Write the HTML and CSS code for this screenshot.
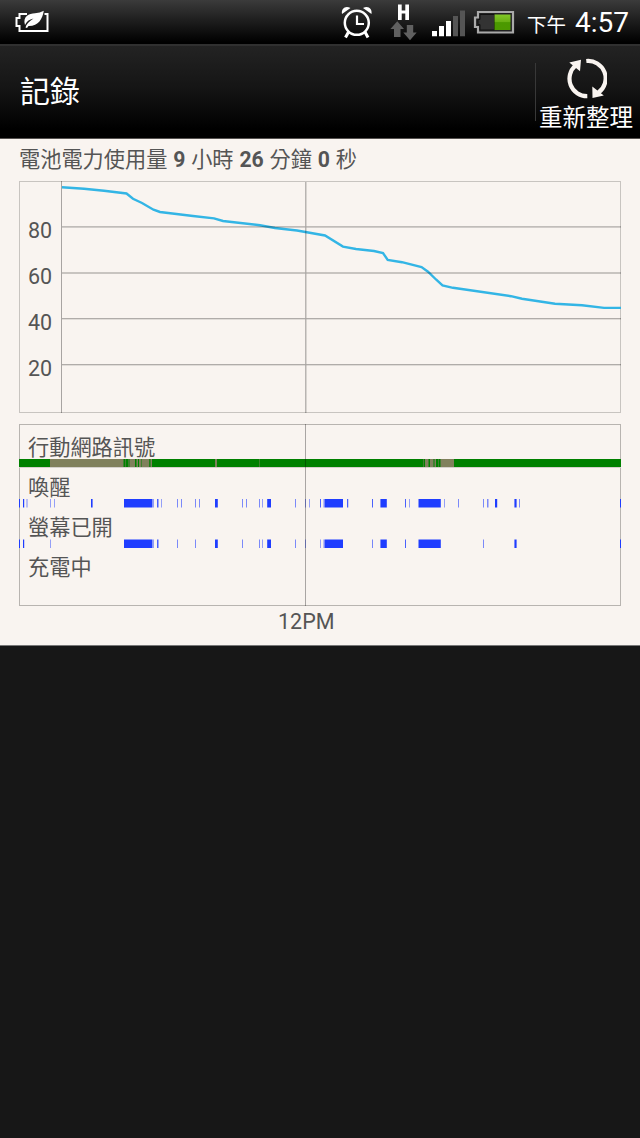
FILE: index.html
```html
<!DOCTYPE html>
<html lang="zh-Hant">
<head>
<meta charset="utf-8">
<title>記錄</title>
<link rel="stylesheet" href="styles.css">
</head>
<body>
<header class="status-bar">
  <svg class="icon-saver" width="34" height="24" viewBox="15 10 34 24">
    <path d="M27 14H19.500V18H16.500V26H19.500V31H47.500V14H44.500" fill="none" stroke="#fff" stroke-width="2"/>
    <path d="M43.800 10.800C42.500 19 38.500 26.200 28.500 26L27 28L25.500 27.500C26 24.500 29 21.500 33.500 18.500C29 19.500 26.500 21.500 25 25C22.500 16.500 29 13.500 35 13.300Q40 13 43.800 10.800Z" fill="#fff"/>
  </svg>
  <div class="status-right">
    <svg width="176" height="38" viewBox="340 4 176 38">
      <g fill="none" stroke="#fff">
        <circle cx="356.800" cy="22.800" r="12" stroke-width="2.500"/>
        <path d="M357 15.500V24H364" stroke-width="2.200"/>
        <path d="M348.500 32L345.500 37.500M365 32L368 37.500" stroke-width="3"/>
      </g>
      <path d="M342 14C341 8.500 345.500 5 350.500 8ZM371.500 14C372.500 8.500 368 5 363 8Z" fill="#fff"/>
      <path d="M398 4.500h3.700v6h3.600v-6h3.700v15.500h-3.700v-6.500h-3.600v6.500h-3.700z" fill="#fff"/>
      <path d="M397.300 21.300L404 29h-3.500v8h-6.500v-8h-3.600zM410 40.200L403.300 32.500h3.500V25h6.400v7.500h3.500z" fill="#606060"/>
      <path d="M432 31h5v5.300h-5zM439 26h5v10.300h-5zM446 21h5v15.300h-5z" fill="#fff"/>
      <path d="M453 16h5v20.300h-5zM460 10.500h5v25.800h-5z" fill="#555"/>
      <path d="M478 12H513V32.500H478V27H475V17.500H478Z" fill="#222" stroke="#aaa" stroke-width="2.200"/>
      <defs>
        <linearGradient id="charge" x2="0" y2="1"><stop stop-color="#83c928"/><stop offset=".48" stop-color="#68af14"/><stop offset=".52" stop-color="#4b9900"/><stop offset="1" stop-color="#4c9800"/></linearGradient>
      </defs>
      <path d="M480 14.500h14.500v15.500h-14.500v-5.500h-2v-5h2z" fill="#333" stroke="#111"/>
      <rect x="494.500" y="14.500" width="16" height="15.500" fill="url(#charge)"/>
    </svg>
    <span class="ampm">下午</span>
    <span class="clock">4:57</span>
  </div>
</header>

<div class="action-bar">
  <h1>記錄</h1>
  <div class="refresh">
    <svg width="42" height="42" viewBox="565 57 42 42">
      <path d="M587.300 96.200A17.500 17.500 0 0 1 575.500 65.500M586.300 61A17.500 17.500 0 0 1 598.500 92.500" fill="none" stroke="#f9f4f0" stroke-width="4.200"/>
      <path d="M569.300 62.500L581 59.800L580 71.300ZM592.300 86.500L592.500 98L603.800 95.500Z" fill="#f9f4f0"/>
    </svg>
    <span>重新整理</span>
  </div>
</div>

<main class="content">
  <p class="duration">電池電力使用量 <b>9</b> 小時 <b>26</b> 分鐘 <b>0</b> 秒</p>

  <section class="level-chart">
    <div class="levels"><span>80</span><span>60</span><span>40</span><span>20</span></div>
    <svg class="plot" width="560" height="232" viewBox="61 181 560 232">
      <path d="M62 187.300L84 188.800L104 190.700L126.500 193.500L133 198.800L142 203L153.500 209.700L160 212L193 216L214 218.400L223 221L260 225.200L275 228L297 230.500L325 235.500L343 246.600L356 249L374 251L383 253L387.700 260L402 262.200L421.500 267L428 271.700L436 279.500L442.500 285.500L453 287.800L511 296.200L522 298.700L555 303.700L582 305.200L604 307.900H621" fill="none" stroke="#33b5e5" stroke-width="2.400"/>
      <g class="grid-lines">
        <rect x="61" y="181" width="1" height="232"/>
        <rect x="305.200" y="182" width="1.200" height="231"/>
        <rect x="62" y="226.300" width="559" height="1.200"/>
        <rect x="62" y="272.400" width="559" height="1.200"/>
        <rect x="62" y="318.100" width="559" height="1.200"/>
        <rect x="62" y="364.100" width="559" height="1.200"/>
      </g>
    </svg>
  </section>

  <section class="events">
    <div class="event"><span>行動網路訊號</span>
      <svg width="602" height="9" viewBox="19 0 602 9">
        <path d="M19 4H621" stroke="#008000" stroke-width="8"/>
        <path d="M50 4h73.500M130 4h5M137 4h1M139 4h2M142 4h7M151 4h1M215 4h2M425 4h3M430 4h4M435 4h1M441 4h13" stroke="#80805c" stroke-width="8"/>
        <path d="M125 4h1M128 4h2M136 4h1M141 4h1M149.500 4h1.500M259 4h1M423 4h1M428 4h1M433 4h2M438 4h1M440 4h1" stroke="#408030" stroke-width="8"/>
        <path d="M19 8.500H621" stroke="#d4d0cb"/>
      </svg>
    </div>
    <div class="event"><span>喚醒</span>
      <svg width="602" height="9" viewBox="19 0 602 9">
        <g fill="none" stroke="#1f3dff" stroke-width="8.500">
          <path d="M19 4.200h1M23 4.200h1.200M91 4.200h1.600M124 4.200h28.500M157.200 4.200h1.200M215 4.200h2.800M267.200 4.200h3.800M320.200 4.200h.8M325 4.200h18M347.200 4.200h1M372 4.200h.8M381 4.200h5.800M405 4.200h.8M418.500 4.200h22.300M495 4.200h2.200M515 4.200h1.600M620 4.200h1"/>
          <path opacity=".58" d="M26.500 4.200h1M50 4.200h.8M54 4.200h.8M153 4.200h.8M161 4.200h.8M177 4.200h1M181 4.200h1M195 4.200h1M199 4.200h1M242 4.200h1M246 4.200h1M259 4.200h1M262 4.200h.8M295 4.200h1M305 4.200h.8M309 4.200h.8M323.500 4.200h1.500M380 4.200h1M409 4.200h.8M444 4.200h.8M458 4.200h1M483 4.200h1M487 4.200h1.500M514 4.200h1M519 4.200h1"/>
        </g>
      </svg>
    </div>
    <div class="event"><span>螢幕已開</span>
      <svg width="602" height="9" viewBox="19 0 602 9">
        <g fill="none" stroke="#1f3dff" stroke-width="8.500">
          <path d="M19 4.700h1M23 4.700h1.200M124 4.700h28.500M157.200 4.700h1.200M215 4.700h2.800M267.200 4.700h3.800M325 4.700h18M372 4.700h.6M381 4.700h5.800M405 4.700h.8M418.500 4.700h22.300M515 4.700h1.600M620 4.700h1"/>
          <path opacity=".58" d="M50 4.700h.8M153 4.700h.8M177 4.700h1M195 4.700h1M242 4.700h1M259 4.700h1M262 4.700h.8M295 4.700h1M305 4.700h.8M320 4.700h.8M323.500 4.700h1.500M380 4.700h1M483 4.700h1M514 4.700h1"/>
        </g>
      </svg>
    </div>
    <div class="event"><span>充電中</span></div>
  </section>
  <div class="time-axis">12PM</div>
</main>
</body>
</html>
```
FILE: styles.css
```css
* {
  box-sizing: border-box;
}

body {
  margin: 0;
  min-height: 1138px;
  background: #171717;
  font-family: Roboto, "Noto Sans CJK TC", sans-serif;
  color: #555;
}

.status-bar {
  display: flex;
  justify-content: space-between;
  height: 44px;
  padding: 0 11px 0 15px;
  background: linear-gradient(#3b3b3b, #1d1d1d 48%, #000 96%);
  color: #fff;
}

.icon-saver {
  margin-top: 10px;
}

.status-right {
  display: flex;
  align-items: flex-start;
}

.status-right svg {
  margin-top: 4px;
}

.ampm {
  margin: 11px 9px 0 11px;
  font-size: 19.500px;
  line-height: 29px;
}

.clock {
  font-size: 28px;
  line-height: 45px;
}

.action-bar {
  display: flex;
  justify-content: space-between;
  height: 95px;
  padding-left: 20px;
  border-top: 2px solid #303030;
  border-bottom: 1px solid #55514f;
  background: linear-gradient(#232323, #151515 45%, #000 90%);
  color: #fff;
}

h1 {
  margin: 0;
  font-size: 30px;
  line-height: 92px;
  font-weight: 400;
}

.refresh {
  position: relative;
  display: flex;
  flex-direction: column;
  align-items: center;
  width: 105px;
  padding: 11px 5px 0 2px;
  font-size: 23.500px;
  line-height: 38px;
  white-space: nowrap;
}

.refresh::before {
  content: "";
  position: absolute;
  left: 0;
  top: 17px;
  width: 1px;
  height: 58px;
  background: #383838;
}

.content {
  height: 507px;
  padding: 0 19px;
  border-bottom: 1px solid #777;
  background: #f9f4f0;
}

.duration {
  margin: 0;
  height: 42px;
  font-size: 21.200px;
  line-height: 42px;
  word-spacing: .6px;
  white-space: pre;
}

.level-chart {
  display: flex;
  justify-content: space-between;
  height: 232px;
  box-shadow: inset 0 0 0 1px #c8c4c0;
}

.levels {
  display: flex;
  flex-direction: column;
  padding: 27px 0 0 9px;
  font-size: 21.500px;
  line-height: 46px;
}

.plot {
  display: block;
}

.grid-lines {
  fill: #000;
  opacity: .32;
}

.events {
  position: relative;
  height: 182px;
  margin-top: 11px;
  padding-top: 7px;
  box-shadow: inset 0 0 0 1px #b8b4b0;
}

.events::after {
  content: "";
  position: absolute;
  left: 286px;
  top: 0;
  width: 1px;
  height: 182px;
  background: rgba(0, 0, 0, .32);
}

.event {
  height: 40px;
  font-size: 21.200px;
  line-height: 33px;
}

.event span {
  display: block;
  height: 28px;
  padding-left: 9px;
}

.event svg {
  display: block;
}

.time-axis {
  padding-left: 259px;
  font-size: 21.500px;
  line-height: 32px;
}
```
